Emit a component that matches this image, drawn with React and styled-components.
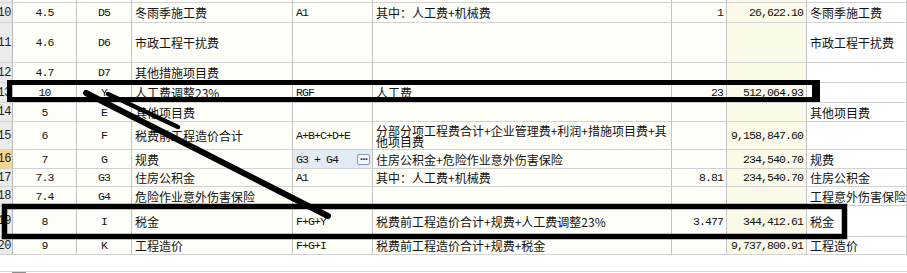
import React from 'react';
import styled, { createGlobalStyle } from 'styled-components';

const GlobalStyle = createGlobalStyle`
  html, body {
    margin: 0;
    padding: 0;
    background: #ffffff;
    overflow: hidden;
  }
`;

const COLS = '13px 64px 55px 161px 80px 299px 55px 80px 100px';

const rows = [
  { n: '9', h: 20, c: ['', '', '安全文明施工措施费用', '', '', '', '', '安全文明施工措施费用'] },
  { n: '10', h: 20, c: ['4.5', 'D5', '冬雨季施工费', 'A1', '其中：人工费+机械费', '1', '26,622.10', '冬雨季施工费'] },
  { n: '11', h: 40, c: ['4.6', 'D6', '市政工程干扰费', '', '', '', '', '市政工程干扰费'] },
  { n: '12', h: 20, c: ['4.7', 'D7', '其他措施项目费', '', '', '', '', ''] },
  { n: '13', h: 20, c: ['10', 'Y', '人工费调整23%', 'RGF', '人工费', '23', '512,064.93', ''] },
  { n: '14', h: 19, c: ['5', 'E', '其他项目费', '', '', '', '', '其他项目费'] },
  {
    n: '15',
    h: 28,
    c: ['6', 'F', '税费前工程造价合计', 'A+B+C+D+E', ['分部分项工程费合计+企业管理费+利润+措施项目费+其', '他项目费'], '', '9,158,847.60', ''],
  },
  { n: '16', h: 19, active: true, c: ['7', 'G', '规费', 'G3 + G4', '住房公积金+危险作业意外伤害保险', '', '234,540.70', '规费'] },
  { n: '17', h: 18, c: ['7.3', 'G3', '住房公积金', 'A1', '其中：人工费+机械费', '8.81', '234,540.70', '住房公积金'] },
  { n: '18', h: 19, c: ['7.4', 'G4', '危险作业意外伤害保险', '', '', '', '', '工程意外伤害保险费'] },
  { n: '19', h: 31, c: ['8', 'I', '税金', 'F+G+Y', '税费前工程造价合计+规费+人工费调整23%', '3.477', '344,412.61', '税金'] },
  { n: '20', h: 18, c: ['9', 'K', '工程造价', 'F+G+I', '税费前工程造价合计+规费+税金', '', '9,737,800.91', '工程造价'] },
];

// column kinds: align / mono font / background
const colSpec = [
  { align: 'center', mono: true },
  { align: 'center', mono: true },
  { align: 'left' },
  { align: 'left', mono: true },
  { align: 'left' },
  { align: 'right', mono: true },
  { align: 'right', mono: true, tint: true },
  { align: 'left', plain: true },
];

const App = () => (
  <>
    <GlobalStyle />
    <Page>
      <Sheet>
        {rows.map((row) => (
          <Row key={row.n} $h={row.h}>
            <RowHead $active={row.active}>
              <span>{row.n}</span>
            </RowHead>
            {row.c.map((val, i) => {
              const spec = colSpec[i];
              const editing = row.active && i === 3;
              return (
                <Cell
                  key={i}
                  $align={spec.align}
                  $mono={spec.mono}
                  $tint={spec.tint}
                  $plain={spec.plain}
                  $editing={editing}
                >
                  {Array.isArray(val) ? (
                    <Wrapped>
                      {val[0]}
                      <br />
                      {val[1]}
                    </Wrapped>
                  ) : (
                    <span>{val}</span>
                  )}
                  {editing && <MoreButton>···</MoreButton>}
                </Cell>
              );
            })}
          </Row>
        ))}
      </Sheet>
      <Footer>
        <Thumb />
      </Footer>
      <Marks viewBox="0 0 907 273" width="907" height="273">
        <rect x="9.5" y="82.5" width="807" height="17" fill="none" stroke="#000" strokeWidth="5" />
        <line x1="816" y1="80" x2="816" y2="102" stroke="#000" strokeWidth="8" />
        <rect x="4.5" y="206.5" width="840" height="30" fill="none" stroke="#000" strokeWidth="5.5" />
        <line x1="86" y1="93" x2="328" y2="216" stroke="#000" strokeWidth="6" strokeLinecap="round" />
        <line x1="108" y1="94" x2="178" y2="127" stroke="#000" strokeWidth="4.5" strokeLinecap="round" />
      </Marks>
    </Page>
  </>
);

export default App;

const Page = styled.div`
  position: relative;
  width: 907px;
  height: 273px;
  overflow: hidden;
  background: #ffffff;
`;

const Sheet = styled.div`
  display: flex;
  flex-direction: column;
  margin-top: -17px;
`;

const Row = styled.div`
  display: grid;
  grid-template-columns: ${COLS};
  height: ${(p) => p.$h}px;
`;

const RowHead = styled.div`
  box-sizing: border-box;
  display: flex;
  align-items: center;
  justify-content: flex-end;
  padding-right: 1px;
  overflow: hidden;
  background: ${(p) => (p.$active ? '#f6d58c' : '#ebebeb')};
  border-right: 1px solid #b9b9b9;
  border-bottom: 1px solid #d2d2d2;
  font-family: 'Liberation Mono', monospace;
  font-size: 12px;
  letter-spacing: -0.4px;
  color: #222;
  white-space: nowrap;
`;

const Cell = styled.div`
  box-sizing: border-box;
  position: relative;
  display: flex;
  align-items: center;
  justify-content: ${(p) =>
    p.$align === 'center' ? 'center' : p.$align === 'right' ? 'flex-end' : 'flex-start'};
  padding: 0 3px;
  overflow: hidden;
  white-space: nowrap;
  background: ${(p) =>
    p.$editing ? '#e2ebf6' : p.$tint ? '#fbf9e8' : p.$plain ? '#ffffff' : '#fffffa'};
  border-right: 1px solid #c4c4c4;
  border-bottom: 1px solid #d2d2d2;
  color: #111;
  font-family: ${(p) =>
    p.$mono ? "'Liberation Mono', monospace" : "'Noto Sans CJK SC', sans-serif"};
  font-size: ${(p) => (p.$mono ? '11.5px' : '12px')};
  letter-spacing: ${(p) => (p.$mono ? '-0.9px' : '0')};
`;

const Wrapped = styled.span`
  display: block;
  line-height: 11px;
  padding-top: 1px;
  white-space: nowrap;
`;

const MoreButton = styled.span`
  position: absolute;
  right: 2px;
  top: 4px;
  width: 13px;
  height: 11px;
  box-sizing: border-box;
  border: 1px solid #8a9bb3;
  border-radius: 2px;
  background: #f4f6fa;
  display: flex;
  align-items: center;
  justify-content: center;
  font-family: 'DejaVu Sans', sans-serif;
  font-size: 9px;
  font-weight: bold;
  letter-spacing: -1px;
  line-height: 1;
  color: #223;
`;

const Footer = styled.div`
  height: 18px;
  position: relative;
  &::after {
    content: '';
    position: absolute;
    left: 0;
    right: 0;
    bottom: 1px;
    border-top: 1px solid #d8d8d8;
  }
`;

const Thumb = styled.div`
  position: absolute;
  left: 12px;
  bottom: 0;
  width: 14px;
  height: 2px;
  background: #8c8c8c;
`;

const Marks = styled.svg`
  position: absolute;
  left: 0;
  top: 0;
  pointer-events: none;
`;
